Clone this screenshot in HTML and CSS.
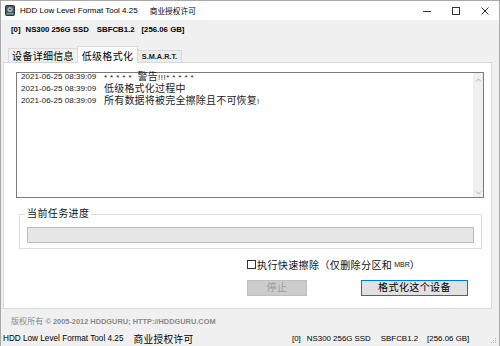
FILE: index.html
```html
<!DOCTYPE html>
<html lang="zh-CN">
<head>
<meta charset="utf-8">
<title>HDD Low Level Format Tool 4.25</title>
<link rel="stylesheet" href="styles.css">
</head>
<body>
<div class="window">
  <div class="titlebar">
    <svg class="appicon" width="10" height="11" viewBox="0 0 10 11">
      <rect x="0.5" y="0.5" width="9" height="10" rx="1" fill="#4a5a66" stroke="#2b3338"/>
      <circle cx="5" cy="4.5" r="2.6" fill="#9fb4c2"/>
      <circle cx="5" cy="4.5" r="0.8" fill="#2b3338"/>
      <rect x="1.5" y="8" width="7" height="1.5" fill="#7fa06a"/>
    </svg>
    <span class="title">HDD Low Level Format Tool 4.25</span>
    <span class="title-cjk">商业授权许可</span>
    <div class="controls">
      <span class="ctl"><svg width="10" height="10" viewBox="0 0 10 10"><path d="M1 5.5h8" stroke="#333" stroke-width="1"/></svg></span>
      <span class="ctl"><svg width="10" height="10" viewBox="0 0 10 10"><rect x="1.5" y="1.5" width="7" height="7" fill="none" stroke="#333" stroke-width="1"/></svg></span>
      <span class="ctl"><svg width="10" height="10" viewBox="0 0 10 10"><path d="M1.5 1.5l7 7M8.5 1.5l-7 7" stroke="#333" stroke-width="1"/></svg></span>
    </div>
  </div>

  <div class="driveinfo">
    <span class="d0">[0]</span>
    <span class="d1">NS300 256G SSD</span>
    <span class="d2">SBFCB1.2</span>
    <span class="d3">[256.06 GB]</span>
  </div>

  <div class="tabs">
    <div class="tab-spacer"></div>
    <div class="tab tab-first">设备详细信息</div>
    <div class="tab tab-active">低级格式化</div>
    <div class="tab tab-smart">S.M.A.R.T.</div>
    <div class="tab-fill"></div>
  </div>

  <div class="panel">
    <div class="log">
      <div class="log-lines">
        <div class="line"><span class="ts">2021-06-25 08:39:09</span><span class="msg"><span class="stars">*****</span> 警告<span class="bang">!!!</span><span class="stars">*****</span></span></div>
        <div class="line"><span class="ts">2021-06-25 08:39:09</span><span class="msg">低级格式化过程中</span></div>
        <div class="line"><span class="ts">2021-06-25 08:39:09</span><span class="msg">所有数据将被完全擦除且不可恢复<span class="bang">!</span></span></div>
      </div>
      <div class="scroll">
        <svg width="7" height="5" viewBox="0 0 7 5"><path d="M1 3.5L3.5 1L6 3.5" fill="none" stroke="#b0b0b0" stroke-width="1"/></svg>
        <svg width="7" height="5" viewBox="0 0 7 5"><path d="M1 1.5L3.5 4L6 1.5" fill="none" stroke="#b0b0b0" stroke-width="1"/></svg>
      </div>
    </div>

    <fieldset class="group">
      <legend>当前任务进度</legend>
      <div class="progress"></div>
    </fieldset>

    <label class="check"><span class="box"></span>执行快速擦除（仅删除分区和 <span class="mbr">MBR</span>）</label>

    <div class="buttons">
      <button class="btn btn-disabled" disabled>停止</button>
      <button class="btn btn-primary">格式化这个设备</button>
    </div>
  </div>

  <div class="copyright"><span class="cr-cjk">版权所有</span> © 2005-2012 HDDGURU; HTTP://HDDGURU.COM</div>

  <div class="statusbar">
    <div class="sb-left"><span class="sb-title">HDD Low Level Format Tool 4.25</span><span class="sb-cjk">商业授权许可</span></div>
    <div class="sb-right">
      <span>[0]</span><span class="s1">NS300 256G SSD</span><span class="s2">SBFCB1.2</span><span class="s3">[256.06 GB]</span>
    </div>
    <svg class="grip" width="6" height="6" viewBox="0 0 6 6">
      <rect x="4" y="0" width="1" height="1" fill="#b5b5b5"/>
      <rect x="2" y="2" width="1" height="1" fill="#b5b5b5"/>
      <rect x="4" y="2" width="1" height="1" fill="#b5b5b5"/>
      <rect x="0" y="4" width="1" height="1" fill="#b5b5b5"/>
      <rect x="2" y="4" width="1" height="1" fill="#b5b5b5"/>
      <rect x="4" y="4" width="1" height="1" fill="#b5b5b5"/>
    </svg>
  </div>
</div>
</body>
</html>
```

FILE: styles.css
```css
* { box-sizing: border-box; }
html, body { margin: 0; padding: 0; }
body {
  width: 500px;
  height: 346px;
  overflow: hidden;
  background: #f0f0f0;
  font-family: "Liberation Sans", "Noto Sans CJK SC", sans-serif;
  color: #000;
}
.window {
  width: 500px;
  height: 346px;
  border: 1px solid #a9a9a9;
  border-bottom: none;
  background: #f0f0f0;
  display: flex;
  flex-direction: column;
}

/* title bar */
.titlebar {
  height: 19px;
  background: #fff;
  display: flex;
  align-items: center;
  flex-shrink: 0;
}
.appicon { margin-left: 4px; margin-right: 5px; flex-shrink: 0; }
.title { font-size: 8px; color: #000; white-space: nowrap; }
.title-cjk { font-size: 7.7px; margin-left: 12px; color: #000; white-space: nowrap; }
.controls { margin-left: auto; display: flex; height: 19px; }
.ctl { width: 29px; height: 19px; display: flex; align-items: center; justify-content: center; }

/* drive info */
.driveinfo {
  height: 26px;
  padding-top: 1px;
  line-height: 18px;
  font-size: 7.8px;
  font-weight: bold;
  padding-left: 10px;
  white-space: nowrap;
  display: flex;
  flex-shrink: 0;
}
.d1 { margin-left: 5px; }
.d2 { margin-left: 8px; }
.d3 { margin-left: 7px; }

/* tabs */
.tabs {
  height: 17px;
  margin-left: 2px;
  width: 489px;
  display: flex;
  align-items: flex-end;
  flex-shrink: 0;
}
.tab-spacer { width: 5px; height: 1px; border-bottom: 1px solid #d9d9d9; }
.tab-fill { flex: 1; height: 1px; border-bottom: 1px solid #d9d9d9; }
.tab {
  font-size: 10px;
  white-space: nowrap;
  display: flex;
  align-items: center;
  justify-content: center;
  background: #f0f0f0;
  border: 1px solid #d9d9d9;
}
.tab-first { width: 69px; height: 15px; border-right: none; padding-bottom: 1px; letter-spacing: 0.3px; }
.tab-active { width: 61px; height: 17px; background: #fff; border-bottom: none; letter-spacing: 0.3px; }
.tab-smart {
  width: 44px; height: 13px; border-left: none;
  font-size: 7.3px; font-weight: bold; color: #222;
  background: #ececec;
}

/* panel */
.panel {
  margin-left: 2px;
  width: 489px;
  height: 246px;
  background: #fff;
  border: 1px solid #d9d9d9;
  border-top: none;
  padding: 9px 7px 0 12px;
  flex-shrink: 0;
}
.log {
  width: 468px;
  height: 126px;
  border: 1px solid #7a7a7a;
  display: flex;
  background: #fff;
}
.log-lines { flex: 1; padding-left: 4px; margin-top: -2px; }
.line { height: 12px; line-height: 12px; display: flex; align-items: center; white-space: nowrap; }
.ts { font-size: 8.1px; color: #1a1a1a; width: 83px; }
.msg { font-size: 10px; color: #1a1a1a; letter-spacing: 0.2px; }
.stars { font-size: 8px; letter-spacing: 3px; }
.bang { font-size: 8px; letter-spacing: 0.5px; }
.scroll {
  width: 10px;
  background: #f0f0f0;
  display: flex;
  flex-direction: column;
  justify-content: space-between;
  align-items: center;
  padding: 5px 0 2px;
}

.group {
  margin: 10px 0 0 3px;
  width: 463px;
  border: 1px solid #dedede;
  padding: 7px 7px 5px 7px;
  min-width: 0;
}
.group legend {
  font-size: 10px;
  line-height: 12px;
  padding: 0 2px;
  margin-left: -2px;
  letter-spacing: 0.4px;
  color: #111;
}
.progress {
  height: 16px;
  background: #e6e6e6;
  border: 1px solid #bcbcbc;
}

.check {
  margin: 9px 0 0 231px;
  height: 12px;
  display: flex;
  align-items: center;
  font-size: 10px;
  letter-spacing: 0.4px;
  white-space: nowrap;
  color: #111;
}
.box {
  width: 9px;
  height: 9px;
  border: 1px solid #333;
  background: #fff;
  margin-right: 1px;
}
.mbr { font-size: 7px; margin-left: 2px; letter-spacing: 0; }

.buttons {
  margin: 10px 0 0 231px;
  display: flex;
  gap: 54px;
}
.btn {
  height: 16px;
  font-family: "Liberation Sans", "Noto Sans CJK SC", sans-serif;
  font-size: 10px;
  padding: 0;
  line-height: 14px;
  letter-spacing: 0.4px;
  border: 1px solid #adadad;
  background: #e1e1e1;
  color: #000;
}
.btn-disabled { width: 60px; background: #cccccc; border-color: #bfbfbf; color: #9c9c9c; }
.btn-primary { width: 107px; border-color: #0078d7; }

.copyright {
  height: 22px;
  padding: 8px 0 0 10px;
  line-height: 10px;
  font-size: 7.4px;
  font-weight: bold;
  color: #8a8a8a;
  white-space: nowrap;
  flex-shrink: 0;
}
.cr-cjk { font-size: 8px; font-weight: normal; letter-spacing: 0.1px; }

.statusbar {
  height: 15px;
  display: flex;
  align-items: center;
  white-space: nowrap;
  flex-shrink: 0;
  font-size: 8.2px;
}
.sb-left { padding-left: 2px; width: 287px; display: flex; align-items: center; }
.sb-cjk { font-size: 9.7px; margin-left: 10px; letter-spacing: 0.3px; }
.sb-right { display: flex; align-items: center; padding-left: 4px; font-size: 7.9px; }
.s1 { margin-left: 6px; }
.s2 { margin-left: 10px; }
.s3 { margin-left: 9px; }
.grip { margin-left: auto; margin-right: 2px; align-self: flex-end; margin-bottom: 2px; }
```
